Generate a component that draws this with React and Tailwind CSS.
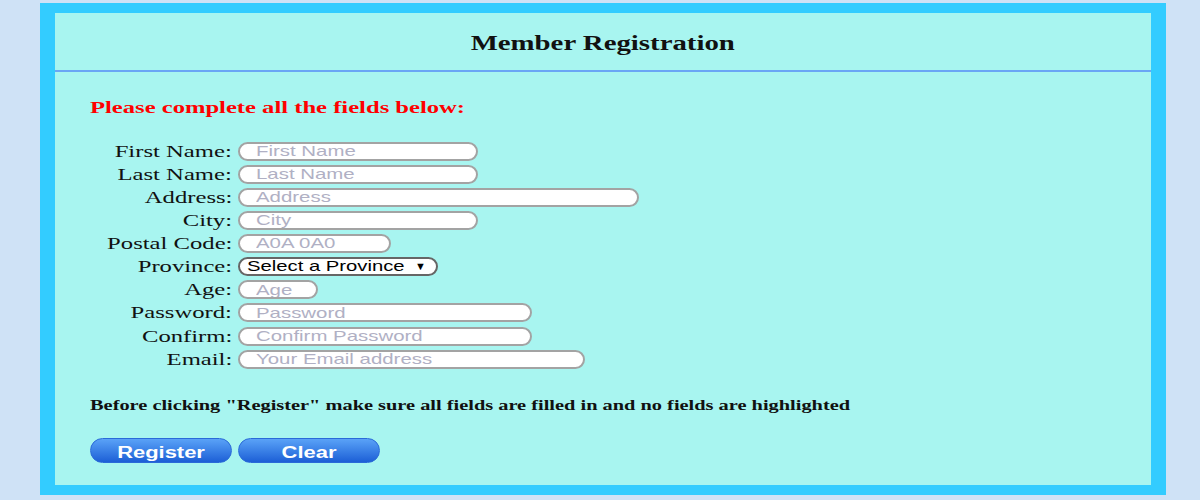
import React from "react";

// text in the reference is drawn wider than the fonts give, so it is stretched with scale-x
const fields = [
  { label: "First Name:", placeholder: "First Name", width: "w-[240px]" },
  { label: "Last Name:", placeholder: "Last Name", width: "w-[240px]" },
  { label: "Address:", placeholder: "Address", width: "w-[401px]" },
  { label: "City:", placeholder: "City", width: "w-[240px]" },
  { label: "Postal Code:", placeholder: "A0A 0A0", width: "w-[153px]" },
  { label: "Province:", select: true },
  { label: "Age:", placeholder: "Age", width: "w-[80px]" },
  { label: "Password:", placeholder: "Password", width: "w-[294px]" },
  { label: "Confirm:", placeholder: "Confirm Password", width: "w-[294px]" },
  { label: "Email:", placeholder: "Your Email address", width: "w-[347px]" },
];

function Field({ f }) {
  if (f.select) {
    return (
      <div className="ml-[6px] w-[200px] h-[19px] rounded-full border-2 border-[#666] bg-white flex items-center justify-between pl-[7px] pr-[10px] font-['Liberation_Sans',sans-serif] text-[15px] text-black">
        <span className="inline-block scale-x-[1.35] origin-left whitespace-nowrap">
          Select a Province
        </span>
        <span className="text-[11px]">▼</span>
      </div>
    );
  }
  return (
    <div
      className={`ml-[6px] ${f.width} h-[19px] rounded-full border-2 border-[#a3a3a3] bg-white flex items-center pl-[16px] font-['Liberation_Sans',sans-serif] text-[15px] text-[#b0b0c4] overflow-hidden`}
    >
      <span className="inline-block scale-x-[1.36] origin-left whitespace-nowrap">
        {f.placeholder}
      </span>
    </div>
  );
}

function App() {
  return (
    <div className="min-h-[500px] bg-[#cfe2f6] pt-[3px] px-[40px] font-['Liberation_Serif',serif]">
      <div className="w-[1126px] bg-[#33ccff] px-[15px] py-[10px]">
        <div className="bg-[#a8f5f0]">
          {/* header */}
          <div className="h-[59px] flex items-center justify-center border-b-2 border-[#6aa6f5]">
            <h1 className="text-[20px] font-bold text-[#111] pt-[2px]">
              <span className="inline-block scale-x-[1.44]">Member Registration</span>
            </h1>
          </div>

          <div className="pl-[35px] pt-[23px] pb-[22px]">
            <p className="text-[17px] font-bold text-[#ff0000]">
              <span className="inline-block scale-x-[1.447] origin-left whitespace-nowrap">
                Please complete all the fields below:
              </span>
            </p>

            <div className="mt-[21px] flex flex-col gap-[4.15px]">
              {fields.map((f) => (
                <div key={f.label} className="flex items-center h-[19px]">
                  <label className="w-[142px] text-right text-[17px] text-[#111] leading-none">
                    <span className="inline-block scale-x-[1.45] origin-right whitespace-nowrap">
                      {f.label}
                    </span>
                  </label>
                  <Field f={f} />
                </div>
              ))}
            </div>

            <p className="mt-[25px] text-[15px] font-bold text-[#111]">
              <span className="inline-block scale-x-[1.358] origin-left whitespace-nowrap">
                Before clicking "Register" make sure all fields are filled in and no fields are highlighted
              </span>
            </p>

            <div className="mt-[22px] flex gap-[6px]">
              <button className="w-[142px] h-[25px] pt-[2px] rounded-full bg-gradient-to-b from-[#5aa2f7] to-[#1d5fd6] border border-[#2a6ad8] text-white font-bold text-[16px] font-['Liberation_Sans',sans-serif]">
                <span className="inline-block scale-x-[1.37]">Register</span>
              </button>
              <button className="w-[142px] h-[25px] pt-[2px] rounded-full bg-gradient-to-b from-[#5aa2f7] to-[#1d5fd6] border border-[#2a6ad8] text-white font-bold text-[16px] font-['Liberation_Sans',sans-serif]">
                <span className="inline-block scale-x-[1.37]">Clear</span>
              </button>
            </div>
          </div>
        </div>
      </div>
    </div>
  );
}

export default App;
